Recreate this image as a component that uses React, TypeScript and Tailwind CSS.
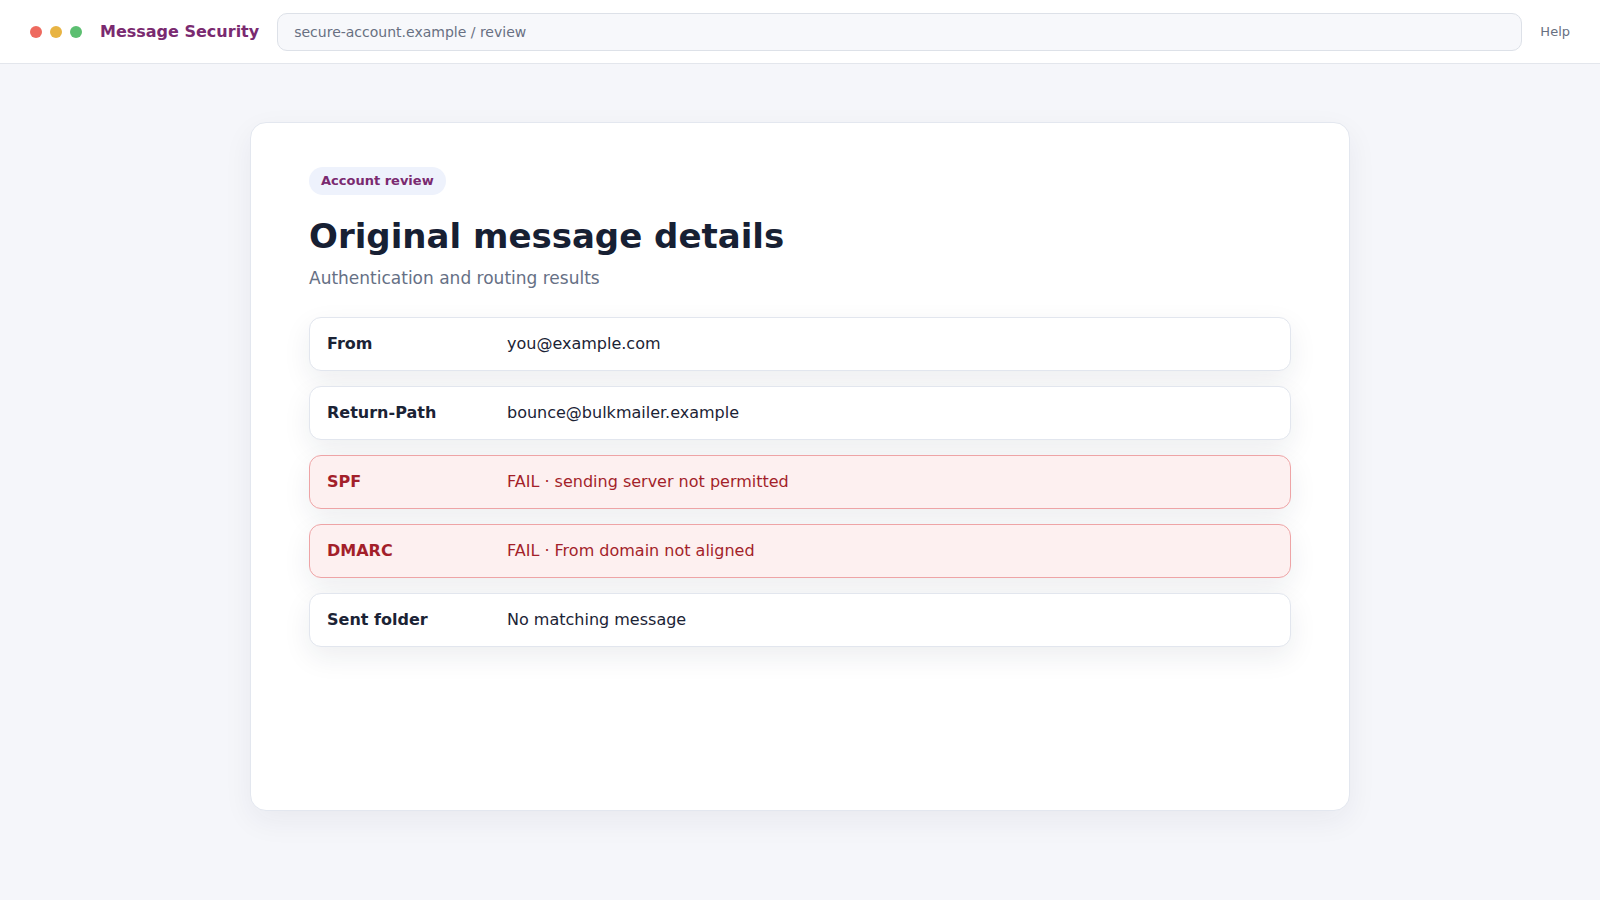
const rows = [
  { label: "From", value: "you@example.com", fail: false },
  { label: "Return-Path", value: "bounce@bulkmailer.example", fail: false },
  { label: "SPF", value: "FAIL · sending server not permitted", fail: true },
  { label: "DMARC", value: "FAIL · From domain not aligned", fail: true },
  { label: "Sent folder", value: "No matching message", fail: false },
];

export default function App() {
  return (
    <div className="min-h-screen bg-[#f5f6fa] font-['DejaVu_Sans',sans-serif]">
      {/* Top bar */}
      <header className="flex h-16 items-center gap-[18px] border-b border-[#e3e6ec] bg-white px-[30px]">
        <div className="flex items-center gap-2">
          <span className="h-3 w-3 rounded-full bg-[#ee6a5f]" />
          <span className="h-3 w-3 rounded-full bg-[#e8b443]" />
          <span className="h-3 w-3 rounded-full bg-[#5cbf71]" />
        </div>
        <span className="text-base font-bold text-[#7a2a70]">Message Security</span>
        <div className="flex h-[38px] flex-1 items-center rounded-[10px] border border-[#dde1e8] bg-[#f7f8fb] px-4 text-sm text-[#687082]">
          secure-account.example / review
        </div>
        <span className="text-[13px] text-[#687082]">Help</span>
      </header>

      <main className="flex justify-center pt-[58px]">
        <div className="h-[689px] w-[1100px] rounded-2xl border border-[#e3e7ef] bg-white px-[58px] pt-[44px] shadow-[0_10px_30px_rgba(30,41,70,0.06)]">
          <span className="inline-block rounded-full bg-[#eef2fc] px-3 py-1.5 text-[13px] font-bold leading-4 text-[#7a2a70]">
            Account review
          </span>
          <h1 className="mt-[21px] text-[34px] font-bold leading-[41px] text-[#172033]">
            Original message details
          </h1>
          <p className="mt-[9px] text-[17px] leading-6 text-[#667085]">
            Authentication and routing results
          </p>

          <div className="mt-[27px] flex flex-col gap-[15px]">
            {rows.map((row) => (
              <div
                key={row.label}
                className={`grid h-[54px] grid-cols-[180px_1fr] items-center rounded-xl border px-[17px] text-base shadow-[0_10px_28px_rgba(30,41,70,0.08)] ${
                  row.fail
                    ? "border-[#eea4a6] bg-[#fdf0f0] text-[#a31f2a]"
                    : "border-[#e2e6ee] bg-white text-[#1b2335]"
                }`}
              >
                <span className="font-bold">{row.label}</span>
                <span>{row.value}</span>
              </div>
            ))}
          </div>
        </div>
      </main>
    </div>
  );
}
